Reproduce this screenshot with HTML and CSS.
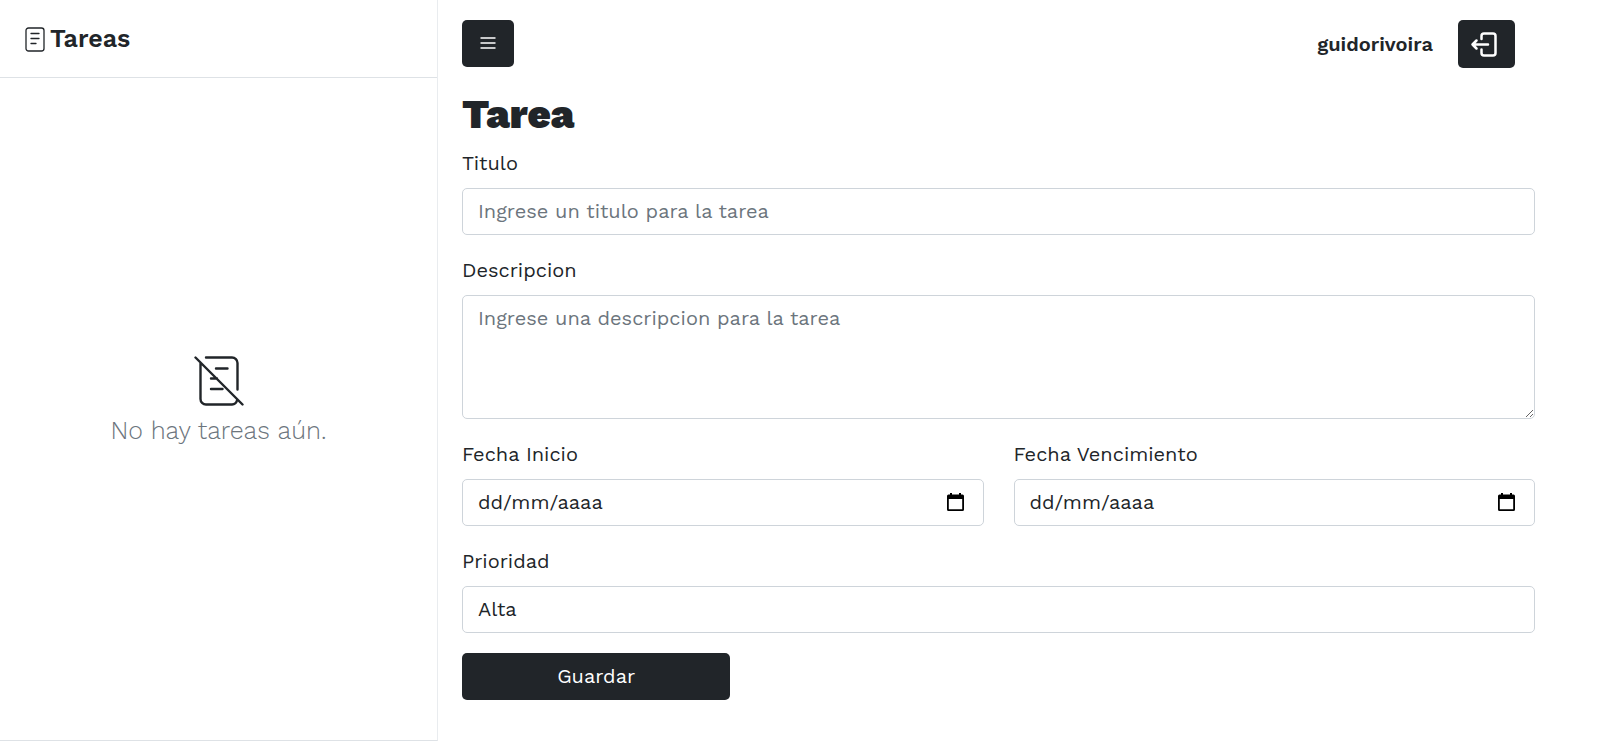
FILE: index.html
```html
<!DOCTYPE html>
<html lang="es">
<head>
<meta charset="utf-8">
<meta name="viewport" content="width=device-width, initial-scale=1">
<title>Tareas</title>
<link rel="stylesheet" href="styles.css">
</head>
<body>
<div class="app">
  <aside class="sidebar">
    <header class="brand">
      <svg class="brand-icon" viewBox="0 0 20 25" fill="none" stroke="currentColor" stroke-linecap="round" aria-hidden="true">
        <rect x="1" y="1" width="18" height="23" rx="2.5" stroke-width="1.3"/>
        <path d="M6 6.5h8M6 11.5h8M6 16.5h5" stroke-width="1.3"/>
      </svg>
      <span class="brand-name">Tareas</span>
    </header>
    <div class="empty">
      <svg class="empty-icon" viewBox="0 0 50 50" fill="none" stroke="currentColor" stroke-width="2.4" stroke-linecap="round" stroke-linejoin="round" aria-hidden="true">
        <path d="M12 1.5h26a5.500 5.500 0 0 1 5.500 5.500v26.500M6.500 7v36a5.500 5.500 0 0 0 5.500 5.500h26a5.500 5.500 0 0 0 5-4M1.500 1.500l47 47M22 12.500h11.500M17 22.500h6M17 33h11.500"/>
      </svg>
      <p class="empty-text">No hay tareas aún.</p>
    </div>
  </aside>
  <main class="main">
    <header class="topbar">
      <button class="btn btn-menu" type="button" aria-label="Menú">
        <svg class="menu-icon" viewBox="0 0 16 14" stroke="currentColor" stroke-width="1.6" aria-hidden="true"><path d="M0.500 2h15M0.500 7h15M0.500 12h15"/></svg>
      </button>
      <div class="account">
        <span class="user">guidorivoira</span>
        <button class="btn btn-logout" type="button" aria-label="Cerrar sesión">
          <svg class="logout-icon" viewBox="0 0 28 26" fill="none" stroke="currentColor" stroke-width="2.500" stroke-linecap="round" stroke-linejoin="round" aria-hidden="true"><path d="M10.500 8V5A2.500 2.500 0 0 1 13 2.500h9A2.500 2.500 0 0 1 24.500 5v17a2.500 2.500 0 0 1-2.500 2.500h-9a2.500 2.500 0 0 1-2.500-2.500v-3.500M17 13.500H1.500M5.500 9.500l-4 4 4 4"/></svg>
        </button>
      </div>
    </header>
    <form class="form">
      <h1 class="title">Tarea</h1>
      <div class="field">
        <label class="label" for="titulo">Titulo</label>
        <input class="control" id="titulo" type="text" placeholder="Ingrese un titulo para la tarea">
      </div>
      <div class="field">
        <label class="label" for="descripcion">Descripcion</label>
        <textarea class="control area" id="descripcion" placeholder="Ingrese una descripcion para la tarea"></textarea>
      </div>
      <div class="dates">
        <div class="field">
          <label class="label" for="inicio">Fecha Inicio</label>
          <div class="control date">
            <input class="date-input" id="inicio" type="text" placeholder="dd/mm/aaaa">
            <button class="date-button" type="button" aria-label="Elegir fecha de inicio">
              <svg class="date-icon" viewBox="0 0 17 18" aria-hidden="true"><path fill="currentColor" fill-rule="evenodd" d="M3 0h2v1.500h7V0h2v1.500h1.500A1.500 1.500 0 0 1 17 3v13.500a1.500 1.500 0 0 1-1.500 1.500h-14A1.500 1.500 0 0 1 0 16.500V3A1.500 1.500 0 0 1 1.500 1.500H3zM1.800 6v10.200h13.400V6z"/></svg>
            </button>
          </div>
        </div>
        <div class="field">
          <label class="label" for="vencimiento">Fecha Vencimiento</label>
          <div class="control date">
            <input class="date-input" id="vencimiento" type="text" placeholder="dd/mm/aaaa">
            <button class="date-button" type="button" aria-label="Elegir fecha de vencimiento">
              <svg class="date-icon" viewBox="0 0 17 18" aria-hidden="true"><path fill="currentColor" fill-rule="evenodd" d="M3 0h2v1.500h7V0h2v1.500h1.500A1.500 1.500 0 0 1 17 3v13.500a1.500 1.500 0 0 1-1.500 1.500h-14A1.500 1.500 0 0 1 0 16.500V3A1.500 1.500 0 0 1 1.500 1.500H3zM1.800 6v10.200h13.400V6z"/></svg>
            </button>
          </div>
        </div>
      </div>
      <div class="field">
        <label class="label" for="prioridad">Prioridad</label>
        <select class="control" id="prioridad">
          <option>Alta</option>
        </select>
      </div>
      <button class="btn btn-save" type="submit">Guardar</button>
    </form>
  </main>
</div>
</body>
</html>
```
FILE: styles.css
```css
* {
  box-sizing: border-box;
}

body {
  margin: 0;
  background: #fff;
  color: #212529;
  font-family: "Work Sans", Inter, "Liberation Sans", sans-serif;
  font-size: 20px;
  line-height: 30px;
}

svg {
  display: block;
}

input,
textarea,
select,
button {
  font: inherit;
  color: inherit;
}

.app {
  display: flex;
  min-height: 100vh;
}

.sidebar {
  display: flex;
  flex-direction: column;
  flex: 0 0 438px;
  border-right: 1px solid #e9ecef;
  border-bottom: 1px solid #dee2e6;
}

.brand {
  display: flex;
  align-items: center;
  gap: 5px;
  padding: 20px 25px 19px;
  border-bottom: 1px solid #dee2e6;
}

.brand-icon {
  width: 20px;
  height: 25px;
}

.brand-name {
  font-size: 25px;
  font-weight: 600;
  line-height: 38px;
}

.empty {
  display: flex;
  flex: 1;
  flex-direction: column;
  align-items: center;
  justify-content: center;
  gap: 6px;
  padding-bottom: 12px;
}

.empty-icon {
  width: 50px;
  height: 50px;
}

.empty-text {
  margin: 0;
  color: #6c757d;
  font-size: 25px;
  font-weight: 300;
  line-height: 38px;
}

.main {
  flex: 1;
  min-width: 0;
  padding: 20px 65px 40px 24px;
}

.topbar {
  display: flex;
  align-items: flex-start;
  justify-content: space-between;
  padding-right: 20px;
}

.account {
  display: flex;
  align-items: center;
  gap: 25px;
}

.user {
  font-weight: 600;
}

.btn {
  display: flex;
  align-items: center;
  justify-content: center;
  padding: 0 0 2px;
  border: 0;
  border-radius: 5px;
  background: #212529;
  color: #fff;
  cursor: pointer;
}

.btn-menu {
  width: 52px;
  height: 47px;
}

.menu-icon {
  width: 16px;
  height: 14px;
}

.btn-logout {
  width: 57px;
  height: 48px;
  padding: 0 4px 0 0;
}

.logout-icon {
  width: 28px;
  height: 26px;
  overflow: visible;
}

.form {
  display: flex;
  flex-direction: column;
  gap: 20px;
  padding-top: 23px;
}

.title {
  margin: 0 0 -11px;
  font-size: 40px;
  font-weight: 900;
  line-height: 48px;
}

.field {
  display: flex;
  flex-direction: column;
  gap: 10px;
  min-width: 0;
}

.control {
  display: block;
  width: 100%;
  height: 47px;
  margin: 0;
  padding: 7px 15px 8px;
  border: 1px solid #ced4da;
  border-radius: 5px;
  outline: 0;
  background: #fff;
  appearance: none;
}

.control::placeholder {
  color: #6c757d;
  opacity: 1;
}

.area {
  height: 124px;
  resize: vertical;
}

.dates {
  display: grid;
  grid-template-columns: 1fr 1fr;
  gap: 30px;
}

.date {
  display: flex;
  align-items: center;
  padding-right: 19px;
}

.date-input {
  flex: 1;
  min-width: 0;
  padding: 0;
  border: 0;
  outline: 0;
  background: transparent;
}

.date-input::placeholder {
  color: #212529;
  opacity: 1;
}

.date-button {
  padding: 0;
  border: 0;
  background: transparent;
  color: #000;
  cursor: pointer;
}

.date-icon {
  width: 17px;
  height: 18px;
}

.btn-save {
  width: 25%;
  height: 47px;
}
```
